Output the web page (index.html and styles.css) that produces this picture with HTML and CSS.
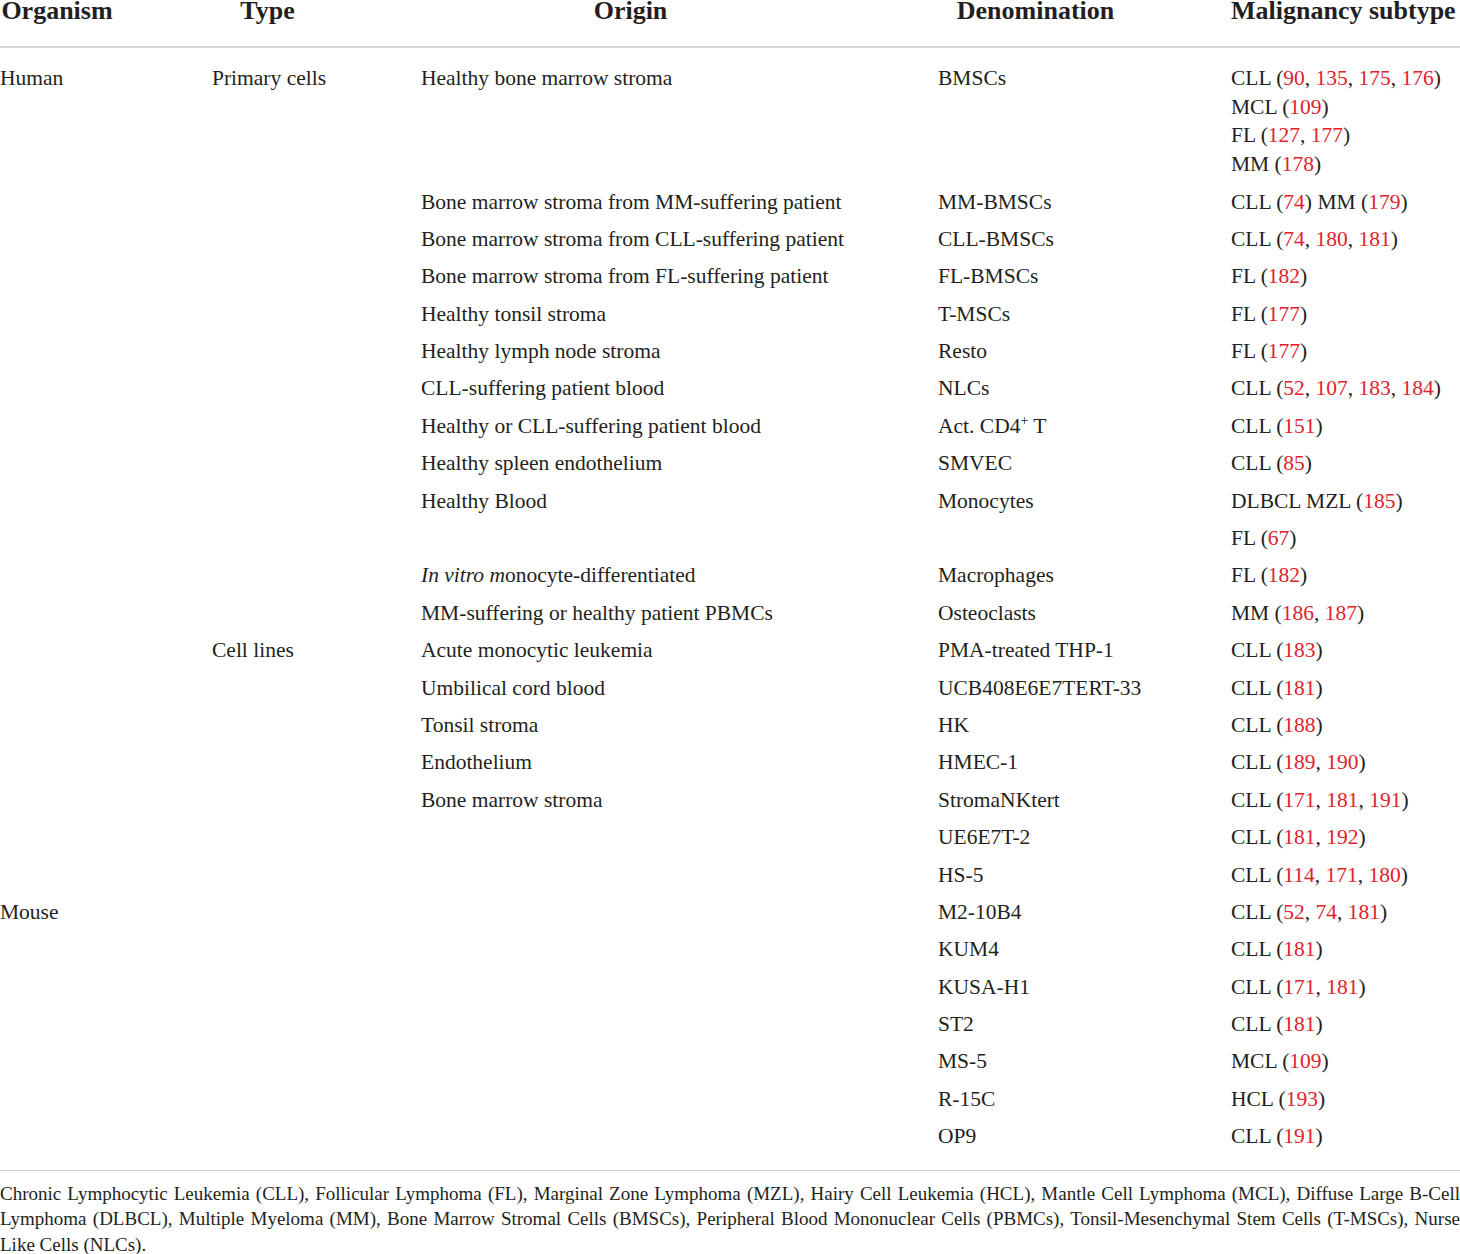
FILE: index.html
```html
<!DOCTYPE html>
<html lang="en">
<head>
    <meta charset="UTF-8">
    <title>Stromal cell models</title>
    <link rel="stylesheet" href="styles.css">
</head>
<body>
    <div class="table-wrap">
        <table class="cells">
            <colgroup>
                <col class="c-org">
                <col class="c-type">
                <col class="c-origin">
                <col class="c-denom">
                <col class="c-sub">
            </colgroup>
            <thead>
                <tr>
                    <th>Organism</th>
                    <th>Type</th>
                    <th>Origin</th>
                    <th>Denomination</th>
                    <th class="left">Malignancy subtype</th>
                </tr>
            </thead>
            <tbody>
                <tr class="first">
                    <td>Human</td>
                    <td>Primary cells</td>
                    <td>Healthy bone marrow stroma</td>
                    <td>BMSCs</td>
                    <td>CLL (<span class="ref">90</span>, <span class="ref">135</span>, <span class="ref">175</span>, <span class="ref">176</span>)<br>MCL (<span class="ref">109</span>)<br>FL (<span class="ref">127</span>, <span class="ref">177</span>)<br>MM (<span class="ref">178</span>)</td>
                </tr>
                <tr>
                    <td></td><td></td>
                    <td>Bone marrow stroma from MM-suffering patient</td>
                    <td>MM-BMSCs</td>
                    <td>CLL (<span class="ref">74</span>) MM (<span class="ref">179</span>)</td>
                </tr>
                <tr>
                    <td></td><td></td>
                    <td>Bone marrow stroma from CLL-suffering patient</td>
                    <td>CLL-BMSCs</td>
                    <td>CLL (<span class="ref">74</span>, <span class="ref">180</span>, <span class="ref">181</span>)</td>
                </tr>
                <tr>
                    <td></td><td></td>
                    <td>Bone marrow stroma from FL-suffering patient</td>
                    <td>FL-BMSCs</td>
                    <td>FL (<span class="ref">182</span>)</td>
                </tr>
                <tr>
                    <td></td><td></td>
                    <td>Healthy tonsil stroma</td>
                    <td>T-MSCs</td>
                    <td>FL (<span class="ref">177</span>)</td>
                </tr>
                <tr>
                    <td></td><td></td>
                    <td>Healthy lymph node stroma</td>
                    <td>Resto</td>
                    <td>FL (<span class="ref">177</span>)</td>
                </tr>
                <tr>
                    <td></td><td></td>
                    <td>CLL-suffering patient blood</td>
                    <td>NLCs</td>
                    <td>CLL (<span class="ref">52</span>, <span class="ref">107</span>, <span class="ref">183</span>, <span class="ref">184</span>)</td>
                </tr>
                <tr>
                    <td></td><td></td>
                    <td>Healthy or CLL-suffering patient blood</td>
                    <td>Act. CD4<sup>+</sup> T</td>
                    <td>CLL (<span class="ref">151</span>)</td>
                </tr>
                <tr>
                    <td></td><td></td>
                    <td>Healthy spleen endothelium</td>
                    <td>SMVEC</td>
                    <td>CLL (<span class="ref">85</span>)</td>
                </tr>
                <tr>
                    <td></td><td></td>
                    <td>Healthy Blood</td>
                    <td>Monocytes</td>
                    <td>DLBCL MZL (<span class="ref">185</span>)</td>
                </tr>
                <tr>
                    <td></td><td></td><td></td><td></td>
                    <td>FL (<span class="ref">67</span>)</td>
                </tr>
                <tr>
                    <td></td><td></td>
                    <td><i>In vitro m</i>onocyte-differentiated</td>
                    <td>Macrophages</td>
                    <td>FL (<span class="ref">182</span>)</td>
                </tr>
                <tr>
                    <td></td><td></td>
                    <td>MM-suffering or healthy patient PBMCs</td>
                    <td>Osteoclasts</td>
                    <td>MM (<span class="ref">186</span>, <span class="ref">187</span>)</td>
                </tr>
                <tr>
                    <td></td>
                    <td>Cell lines</td>
                    <td>Acute monocytic leukemia</td>
                    <td>PMA-treated THP-1</td>
                    <td>CLL (<span class="ref">183</span>)</td>
                </tr>
                <tr>
                    <td></td><td></td>
                    <td>Umbilical cord blood</td>
                    <td>UCB408E6E7TERT-33</td>
                    <td>CLL (<span class="ref">181</span>)</td>
                </tr>
                <tr>
                    <td></td><td></td>
                    <td>Tonsil stroma</td>
                    <td>HK</td>
                    <td>CLL (<span class="ref">188</span>)</td>
                </tr>
                <tr>
                    <td></td><td></td>
                    <td>Endothelium</td>
                    <td>HMEC-1</td>
                    <td>CLL (<span class="ref">189</span>, <span class="ref">190</span>)</td>
                </tr>
                <tr>
                    <td></td><td></td>
                    <td>Bone marrow stroma</td>
                    <td>StromaNKtert</td>
                    <td>CLL (<span class="ref">171</span>, <span class="ref">181</span>, <span class="ref">191</span>)</td>
                </tr>
                <tr>
                    <td></td><td></td><td></td>
                    <td>UE6E7T-2</td>
                    <td>CLL (<span class="ref">181</span>, <span class="ref">192</span>)</td>
                </tr>
                <tr>
                    <td></td><td></td><td></td>
                    <td>HS-5</td>
                    <td>CLL (<span class="ref">114</span>, <span class="ref">171</span>, <span class="ref">180</span>)</td>
                </tr>
                <tr>
                    <td>Mouse</td><td></td><td></td>
                    <td>M2-10B4</td>
                    <td>CLL (<span class="ref">52</span>, <span class="ref">74</span>, <span class="ref">181</span>)</td>
                </tr>
                <tr>
                    <td></td><td></td><td></td>
                    <td>KUM4</td>
                    <td>CLL (<span class="ref">181</span>)</td>
                </tr>
                <tr>
                    <td></td><td></td><td></td>
                    <td>KUSA-H1</td>
                    <td>CLL (<span class="ref">171</span>, <span class="ref">181</span>)</td>
                </tr>
                <tr>
                    <td></td><td></td><td></td>
                    <td>ST2</td>
                    <td>CLL (<span class="ref">181</span>)</td>
                </tr>
                <tr>
                    <td></td><td></td><td></td>
                    <td>MS-5</td>
                    <td>MCL (<span class="ref">109</span>)</td>
                </tr>
                <tr>
                    <td></td><td></td><td></td>
                    <td>R-15C</td>
                    <td>HCL (<span class="ref">193</span>)</td>
                </tr>
                <tr>
                    <td></td><td></td><td></td>
                    <td>OP9</td>
                    <td>CLL (<span class="ref">191</span>)</td>
                </tr>
            </tbody>
        </table>
        <p class="footnote">Chronic Lymphocytic Leukemia (CLL), Follicular Lymphoma (FL), Marginal Zone Lymphoma (MZL), Hairy Cell Leukemia (HCL), Mantle Cell Lymphoma (MCL), Diffuse Large <span class="nowrap">B-Cell</span> Lymphoma (DLBCL), Multiple Myeloma (MM), Bone Marrow Stromal Cells (BMSCs), Peripheral Blood Mononuclear Cells (PBMCs), Tonsil-Mesenchymal Stem Cells (T-MSCs), Nurse Like Cells (NLCs).</p>
    </div>
</body>
</html>
```
FILE: styles.css
```css
body {
    margin: 0;
    background: #fff;
    color: #231f20;
    font-family: "Liberation Serif", "Times New Roman", serif;
    overflow: hidden;
}
.table-wrap {
    width: 1460px;
    margin-top: -4px;
}
.cells {
    width: 100%;
    border-collapse: collapse;
    table-layout: fixed;
}
.c-org { width: 212px; }
.c-type { width: 209px; }
.c-origin { width: 517px; }
.c-denom { width: 293px; }
.c-sub { width: 229px; }
th {
    font-size: 26px;
    font-weight: bold;
    line-height: 30px;
    text-align: center;
    padding: 0 98px 20px 0;
    border-bottom: 2px solid #d6d6d6;
    white-space: nowrap;
}
th.left {
    text-align: left;
    padding-right: 0;
}
td {
    font-size: 21.5px;
    line-height: 28.7px;
    padding: 4.35px 0;
    vertical-align: top;
    white-space: nowrap;
}
.first td {
    padding-top: 16px;
}
tbody tr:last-child td {
    padding-bottom: 19px;
}
td sup {
    font-size: 14px;
    line-height: 0;
    vertical-align: 8px;
}
.ref {
    color: #e0222d;
}
.footnote {
    margin: 0;
    border-top: 1px solid #cfcfcf;
    padding-top: 10px;
    font-size: 19px;
    line-height: 25.5px;
    text-align: justify;
}
.nowrap {
    white-space: nowrap;
}
```
